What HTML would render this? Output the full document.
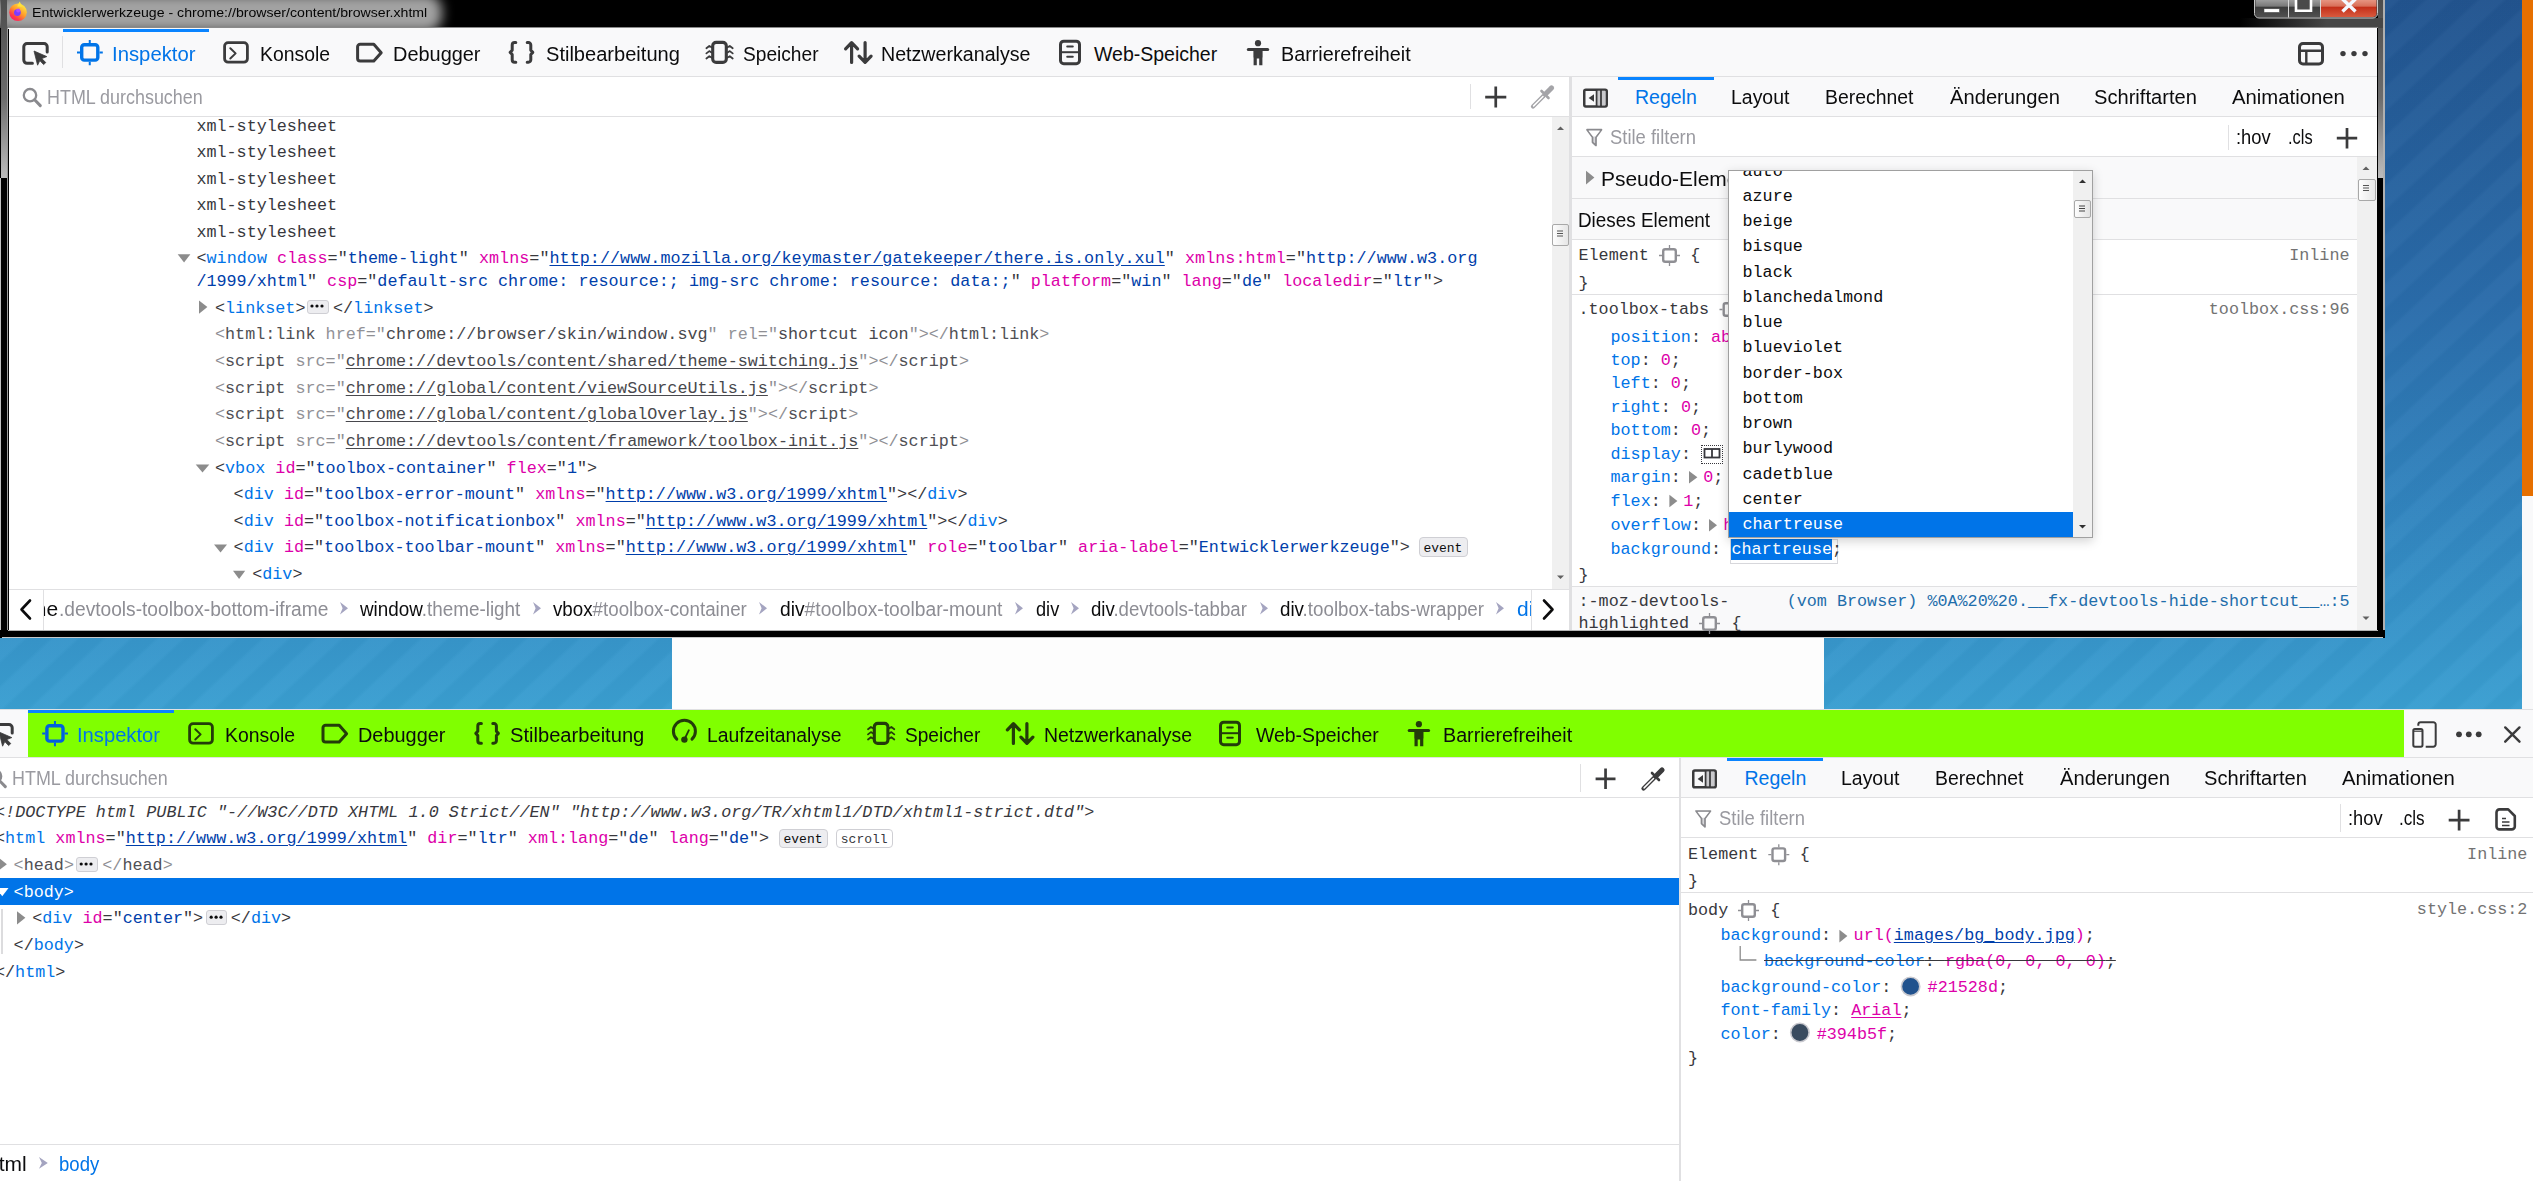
<!DOCTYPE html><html><head><meta charset="utf-8"><style>*{margin:0;padding:0;box-sizing:content-box}
html,body{width:2533px;height:1181px;overflow:hidden;background:#fff}
body{position:relative}
div,svg{position:absolute}
.s{font-family:"Liberation Sans",sans-serif;white-space:pre;line-height:normal;transform-origin:0 0}
.m{font-family:"Liberation Mono",monospace;white-space:pre;line-height:normal;color:#38383d}
i{font-style:inherit}
.t{color:#0074e8}.a{color:#dd00a9}.v{color:#003eaa}.p{color:#38383d}
.gp{color:#8f8f94}.gt{color:#505055}.ga{color:#929297}.gv{color:#48484d}
.u{text-decoration:underline;text-underline-offset:2px}
.pn{color:#0074e8}.pv{color:#dd00a9}.src{color:#737373}.ua{color:#1f6eab}.sw{color:#fff}
</style></head><body><div style="left:0px;top:0px;width:2533px;height:709px;background:repeating-linear-gradient(137deg, rgba(255,255,255,0.024) 0px, rgba(255,255,255,0.024) 14.5px, rgba(0,0,0,0.02) 18px, rgba(0,0,0,0.02) 32.5px, rgba(255,255,255,0.024) 36px),linear-gradient(180deg, #22548f 0px, #2a6caa 300px, #3286c0 520px, #3a9fd1 709px);"></div><div style="left:672px;top:638px;width:1152px;height:71px;background:#fdfdfd;"></div><div style="left:2522px;top:0px;width:11px;height:496px;background:#e66f00;"></div><div style="left:2522px;top:496px;width:11px;height:214px;background:#f9f9fa;"></div><div style="left:0px;top:0px;width:2385px;height:28px;background:#000;"></div><div style="left:0;top:0;width:2385px;height:28px;overflow:hidden"><div style="left:-6px;top:-6px;width:448px;height:38px;border-radius:16px;background:#a2a2a2;filter:blur(6px)"></div></div><div style="left:0px;top:28px;width:9px;height:610px;background:#000;"></div><div style="left:1px;top:0px;width:6px;height:178px;background:linear-gradient(180deg,#4d4d4d 0%,#6c6c6c 55%,#bdbdbd 100%);"></div><div style="left:7px;top:28px;width:1px;height:602px;background:#9a9a9a;"></div><div style="left:2377px;top:0px;width:8px;height:638px;background:#000;"></div><div style="left:2378px;top:0px;width:6px;height:178px;background:linear-gradient(180deg,#4d4d4d 0%,#6c6c6c 55%,#bdbdbd 100%);"></div><div style="left:2240px;top:18px;width:145px;height:10px;background:linear-gradient(90deg,rgba(60,60,60,0),rgba(70,70,70,1) 60%);"></div><div style="left:2383px;top:0px;width:1.5px;height:638px;background:#b0b0b0;"></div><div style="left:0px;top:178px;width:1px;height:460px;background:#c0c0c0;"></div><div style="left:0px;top:630px;width:2385px;height:8px;background:#000;"></div><div style="left:8px;top:630px;width:2370px;height:1px;background:#b4b4b4;"></div><div style="left:2px;top:637px;width:2381px;height:1px;background:#c8c8c8;"></div><div style="left:8px;top:28px;width:2369px;height:1px;background:#f0f0f0;"></div><div style="left:8px;top:27px;width:2370px;height:1px;background:#8a8a8a;"></div><div class="s" style="left:31.75px;top:4.60px;font-size:13.5px;color:#050505;transform:scaleX(1.0452);">Entwicklerwerkzeuge - chrome://browser/content/browser.xhtml</div><svg width="2533" height="1181" viewBox="0 0 2533 1181" style="left:0;top:0;position:absolute"><defs><linearGradient id="ffg" x1="0.85" y1="0.1" x2="0.2" y2="0.95"><stop offset="0" stop-color="#ffe740"/><stop offset="0.45" stop-color="#ff9a2a"/><stop offset="0.8" stop-color="#ff3b4a"/><stop offset="1" stop-color="#ff1a6a"/></linearGradient><linearGradient id="wbg" x1="0" y1="0" x2="0" y2="1"><stop offset="0" stop-color="#a8a8a8"/><stop offset="0.42" stop-color="#7a7a7a"/><stop offset="0.5" stop-color="#3c3c3c"/><stop offset="1" stop-color="#505050"/></linearGradient><linearGradient id="wbr" x1="0" y1="0" x2="0" y2="1"><stop offset="0" stop-color="#eaa08e"/><stop offset="0.42" stop-color="#d9705a"/><stop offset="0.5" stop-color="#c4301a"/><stop offset="1" stop-color="#d85a3e"/></linearGradient></defs><circle cx="18" cy="12.3" r="8.8" fill="url(#ffg)"/><path d="M17.2 6.5 L19.6 1.6 L22.6 6.8 Z" fill="#ffe33a"/><circle cx="17.4" cy="12.6" r="3.4" fill="#7b3cff"/><circle cx="18.2" cy="10.4" r="2" fill="#b04cff"/><path d="M2254.5 -2 V13.5 a4.5 4.5 0 0 0 4.5 4.5 H2373 a4.5 4.5 0 0 0 4.5 -4.5 V-2" fill="#3a3a3a" stroke="#c8c8c8" stroke-width="1"/><path d="M2255.5 -2 V13 a4 4 0 0 0 4 4 H2288 V-2 Z" fill="url(#wbg)"/><rect x="2289" y="-2" width="31" height="19" fill="url(#wbg)"/><path d="M2321 -2 V17 H2372.5 a4 4 0 0 0 4 -4 V-2 Z" fill="url(#wbr)"/><path d="M2288.5 -2 V17.5 M2320.5 -2 V17.5" stroke="#d8d8d8" stroke-width="1"/><rect x="2264" y="8.8" width="15.5" height="3.6" fill="#fff" stroke="#444" stroke-width="0.5"/><path d="M2296 -2 V10.8 H2311 V-2" fill="#4a4a4a" stroke="#fff" stroke-width="2.6"/><path d="M2342.5 -1 L2355.5 11.5 M2355.5 -1 L2342.5 11.5" stroke="#f4f8ff" stroke-width="3.4"/></svg><div style="left:9px;top:28px;width:2368px;height:48px;background:#f9f9fa;"></div><div style="left:9px;top:76px;width:2368px;height:1px;background:#e0e0e2;"></div><div style="left:62px;top:36px;width:1px;height:32px;background:#e0e0e2;"></div><div style="left:63px;top:29px;width:146px;height:3px;background:#0a84ff;"></div><div class="s" style="left:111.96px;top:43.00px;font-size:19.5px;color:#0074e8;transform:scaleX(1.0412);">Inspektor</div><div class="s" style="left:259.81px;top:43.00px;font-size:19.5px;color:#0c0c0d;transform:scaleX(0.9938);">Konsole</div><div class="s" style="left:392.98px;top:43.00px;font-size:19.5px;color:#0c0c0d;transform:scaleX(1.0217);">Debugger</div><div class="s" style="left:545.50px;top:43.00px;font-size:19.5px;color:#0c0c0d;transform:scaleX(1.0290);">Stilbearbeitung</div><div class="s" style="left:743.00px;top:43.00px;font-size:19.5px;color:#0c0c0d;transform:scaleX(0.9810);">Speicher</div><div class="s" style="left:880.99px;top:43.00px;font-size:19.5px;color:#0c0c0d;transform:scaleX(1.0066);">Netzwerkanalyse</div><div class="s" style="left:1094.00px;top:43.00px;font-size:19.5px;color:#0c0c0d;">Web-Speicher</div><div class="s" style="left:1280.69px;top:43.00px;font-size:19.5px;color:#0c0c0d;transform:scaleX(1.0144);">Barrierefreiheit</div><div style="left:9px;top:77px;width:1560px;height:39px;background:#fff;"></div><div style="left:9px;top:116px;width:1560px;height:1px;background:#e0e0e2;"></div><div class="s" style="left:46.58px;top:86.20px;font-size:19.5px;color:#9a9aa0;transform:scaleX(0.9191);">HTML durchsuchen</div><div style="left:1470px;top:84px;width:1px;height:25px;background:#e0e0e2;"></div><div style="left:9px;top:117px;width:1543px;height:473px;background:#fff;"></div><div style="left:1552px;top:117px;width:17px;height:473px;background:#f0f0f0;"></div><div style="left:1552px;top:224px;width:15px;height:20px;border:1px solid #a8a8a8;border-radius:2px;background:linear-gradient(90deg,#fdfdfd,#e6e6e6)"></div><div class="m" style="left:196.40px;top:116.50px;font-size:16.75px;"><i class="p">xml-stylesheet</i></div><div class="m" style="left:196.40px;top:143.10px;font-size:16.75px;"><i class="p">xml-stylesheet</i></div><div class="m" style="left:196.40px;top:169.70px;font-size:16.75px;"><i class="p">xml-stylesheet</i></div><div class="m" style="left:196.40px;top:196.30px;font-size:16.75px;"><i class="p">xml-stylesheet</i></div><div class="m" style="left:196.40px;top:222.90px;font-size:16.75px;"><i class="p">xml-stylesheet</i></div><div class="m" style="left:196.40px;top:248.60px;font-size:16.75px;letter-spacing:0.035px;"><i class="p">&lt;</i><i class="t">window</i> <i class="a">class</i><i class="p">=&quot;</i><i class="v">theme-light</i><i class="p">&quot;</i> <i class="a">xmlns</i><i class="p">=&quot;</i><i class="v u">http://www.mozilla.org/keymaster/gatekeeper/there.is.only.xul</i><i class="p">&quot;</i> <i class="a">xmlns:html</i><i class="p">=&quot;</i><i class="v">http://www.w3.org</i></div><div class="m" style="left:196.40px;top:272.20px;font-size:16.75px;"><i class="v">/1999/xhtml</i><i class="p">&quot;</i> <i class="a">csp</i><i class="p">=&quot;</i><i class="v">default-src chrome: resource:; img-src chrome: resource: data:;</i><i class="p">&quot;</i> <i class="a">platform</i><i class="p">=&quot;</i><i class="v">win</i><i class="p">&quot;</i> <i class="a">lang</i><i class="p">=&quot;</i><i class="v">de</i><i class="p">&quot;</i> <i class="a">localedir</i><i class="p">=&quot;</i><i class="v">ltr</i><i class="p">&quot;&gt;</i></div><div class="m" style="left:215.00px;top:298.60px;font-size:16.75px;"><i class="p">&lt;</i><i class="t">linkset</i><i class="p">&gt;</i></div><div style="left:307px;top:299.5px;width:19.5px;height:12px;background:#ededf0;border:1px solid #cfcfd4;border-radius:3px"></div><div class="m" style="left:333.00px;top:298.60px;font-size:16.75px;"><i class="p">&lt;/</i><i class="t">linkset</i><i class="p">&gt;</i></div><div class="m" style="left:215.00px;top:325.25px;font-size:16.75px;"><i class="gp">&lt;</i><i class="gt">html:link</i> <i class="ga">href</i><i class="gp">=&quot;</i><i class="gv">chrome://browser/skin/window.svg</i><i class="gp">&quot;</i> <i class="ga">rel</i><i class="gp">=&quot;</i><i class="gv">shortcut icon</i><i class="gp">&quot;&gt;&lt;/</i><i class="gt">html:link</i><i class="gp">&gt;</i></div><div class="m" style="left:215.00px;top:351.90px;font-size:16.75px;"><i class="gp">&lt;</i><i class="gt">script</i> <i class="ga">src</i><i class="gp">=&quot;</i><i class="gv u">chrome://devtools/content/shared/theme-switching.js</i><i class="gp">&quot;&gt;&lt;/</i><i class="gt">script</i><i class="gp">&gt;</i></div><div class="m" style="left:215.00px;top:378.55px;font-size:16.75px;"><i class="gp">&lt;</i><i class="gt">script</i> <i class="ga">src</i><i class="gp">=&quot;</i><i class="gv u">chrome://global/content/viewSourceUtils.js</i><i class="gp">&quot;&gt;&lt;/</i><i class="gt">script</i><i class="gp">&gt;</i></div><div class="m" style="left:215.00px;top:405.20px;font-size:16.75px;"><i class="gp">&lt;</i><i class="gt">script</i> <i class="ga">src</i><i class="gp">=&quot;</i><i class="gv u">chrome://global/content/globalOverlay.js</i><i class="gp">&quot;&gt;&lt;/</i><i class="gt">script</i><i class="gp">&gt;</i></div><div class="m" style="left:215.00px;top:431.85px;font-size:16.75px;"><i class="gp">&lt;</i><i class="gt">script</i> <i class="ga">src</i><i class="gp">=&quot;</i><i class="gv u">chrome://devtools/content/framework/toolbox-init.js</i><i class="gp">&quot;&gt;&lt;/</i><i class="gt">script</i><i class="gp">&gt;</i></div><div class="m" style="left:215.00px;top:458.50px;font-size:16.75px;"><i class="p">&lt;</i><i class="t">vbox</i> <i class="a">id</i><i class="p">=&quot;</i><i class="v">toolbox-container</i><i class="p">&quot;</i> <i class="a">flex</i><i class="p">=&quot;</i><i class="v">1</i><i class="p">&quot;&gt;</i></div><div class="m" style="left:233.60px;top:485.15px;font-size:16.75px;"><i class="p">&lt;</i><i class="t">div</i> <i class="a">id</i><i class="p">=&quot;</i><i class="v">toolbox-error-mount</i><i class="p">&quot;</i> <i class="a">xmlns</i><i class="p">=&quot;</i><i class="v u">http://www.w3.org/1999/xhtml</i><i class="p">&quot;&gt;&lt;/</i><i class="t">div</i><i class="p">&gt;</i></div><div class="m" style="left:233.60px;top:511.80px;font-size:16.75px;"><i class="p">&lt;</i><i class="t">div</i> <i class="a">id</i><i class="p">=&quot;</i><i class="v">toolbox-notificationbox</i><i class="p">&quot;</i> <i class="a">xmlns</i><i class="p">=&quot;</i><i class="v u">http://www.w3.org/1999/xhtml</i><i class="p">&quot;&gt;&lt;/</i><i class="t">div</i><i class="p">&gt;</i></div><div class="m" style="left:233.60px;top:538.45px;font-size:16.75px;"><i class="p">&lt;</i><i class="t">div</i> <i class="a">id</i><i class="p">=&quot;</i><i class="v">toolbox-toolbar-mount</i><i class="p">&quot;</i> <i class="a">xmlns</i><i class="p">=&quot;</i><i class="v u">http://www.w3.org/1999/xhtml</i><i class="p">&quot;</i> <i class="a">role</i><i class="p">=&quot;</i><i class="v">toolbar</i><i class="p">&quot;</i> <i class="a">aria-label</i><i class="p">=&quot;</i><i class="v">Entwicklerwerkzeuge</i><i class="p">&quot;&gt;</i></div><div style="left:1419px;top:537px;width:46.6px;height:17.5px;background:#ededf0;border:1px solid #cfcfd4;border-radius:4px"></div><div class="m" style="left:1423.40px;top:541.00px;font-size:13.0px;color:#0c0c0d;">event</div><div class="m" style="left:252.20px;top:565.10px;font-size:16.75px;"><i class="p">&lt;</i><i class="t">div</i><i class="p">&gt;</i></div><svg width="2533" height="1181" viewBox="0 0 2533 1181" style="left:0;top:0;position:absolute"><path d="M1557 130 L1560.5 126.5 L1564 130 Z" fill="#606060"/><path d="M1557 575.5 L1560.5 579 L1564 575.5 Z" fill="#606060"/><path d="M1557 231 H1563 M1557 233.5 H1563 M1557 236 H1563" stroke="#555" stroke-width="1"/><path d="M177.7 254.3 H190.39999999999998 L184.04999999999998 262.6 Z" fill="#8c8c8c"/><path d="M199 300.5 V313.7 L207.4 307.1 Z" fill="#8c8c8c"/><circle cx="312" cy="306" r="1.6" fill="#0c0c0d"/><circle cx="317" cy="306" r="1.6" fill="#0c0c0d"/><circle cx="322" cy="306" r="1.6" fill="#0c0c0d"/><path d="M195.7 464.4 H209.29999999999998 L202.5 472.5 Z" fill="#8c8c8c"/><path d="M214 544.4 H227 L220.5 552.5 Z" fill="#8c8c8c"/><path d="M233 570.8 H245.2 L239.1 578.9 Z" fill="#8c8c8c"/></svg><div style="left:9px;top:589px;width:1560px;height:1px;background:#e0e0e2;"></div><div style="left:9px;top:590px;width:1560px;height:40px;background:#fff;"></div><div style="left:43px;top:590px;width:1px;height:40px;background:#e0e0e2;"></div><div style="left:1531px;top:590px;width:1px;height:40px;background:#e0e0e2;"></div><div style="left:44px;top:590px;width:30px;height:40px;overflow:hidden"><div style="left:-44px;top:-590px;width:2533px;height:1181px"><div class="s" style="left:29.29px;top:597.90px;font-size:19.5px;color:#0c0c0d;transform:scaleX(1.0750);">me</div></div></div><div class="s" style="left:58.52px;top:597.90px;font-size:19.5px;color:#8d8d94;transform:scaleX(0.9822);">.devtools-toolbox-bottom-iframe</div><div style="left:1510px;top:590px;width:21px;height:40px;overflow:hidden"><div style="left:-1510px;top:-590px;width:2533px;height:1181px"><div class="s" style="left:1517.00px;top:597.90px;font-size:19.5px;color:#0074e8;transform:scaleX(1.0750);">div</div></div></div><div class="s" style="left:360.17px;top:597.90px;font-size:19.5px;color:#0c0c0d;transform:scaleX(0.9664);">window<span style="color:#8d8d94">.theme-light</span></div><div class="s" style="left:552.70px;top:597.90px;font-size:19.5px;color:#0c0c0d;transform:scaleX(0.9612);">vbox<span style="color:#8d8d94">#toolbox-container</span></div><div class="s" style="left:780.00px;top:597.90px;font-size:19.5px;color:#0c0c0d;transform:scaleX(0.9865);">div<span style="color:#8d8d94">#toolbox-toolbar-mount</span></div><div class="s" style="left:1035.50px;top:597.90px;font-size:19.5px;color:#0c0c0d;transform:scaleX(0.9334);">div</div><div class="s" style="left:1091.00px;top:597.90px;font-size:19.5px;color:#0c0c0d;transform:scaleX(0.9541);">div<span style="color:#8d8d94">.devtools-tabbar</span></div><div class="s" style="left:1279.80px;top:597.90px;font-size:19.5px;color:#0c0c0d;transform:scaleX(0.9620);">div<span style="color:#8d8d94">.toolbox-tabs-wrapper</span></div><svg width="2533" height="1181" viewBox="0 0 2533 1181" style="left:0;top:0;position:absolute"><path d="M340 602 L348 608.3 L340 614.6 L342.6 608.3 Z" fill="#a4a4c0"/><path d="M533 602 L541 608.3 L533 614.6 L535.6 608.3 Z" fill="#a4a4c0"/><path d="M759 602 L767 608.3 L759 614.6 L761.6 608.3 Z" fill="#a4a4c0"/><path d="M1015 602 L1023 608.3 L1015 614.6 L1017.6 608.3 Z" fill="#a4a4c0"/><path d="M1071 602 L1079 608.3 L1071 614.6 L1073.6 608.3 Z" fill="#a4a4c0"/><path d="M1260 602 L1268 608.3 L1260 614.6 L1262.6 608.3 Z" fill="#a4a4c0"/><path d="M1496 602 L1504 608.3 L1496 614.6 L1498.6 608.3 Z" fill="#a4a4c0"/><path d="M30 600.5 L21.5 609.5 L30 618.5" stroke="#0c0c0d" stroke-width="2.6" fill="none" stroke-linecap="round" stroke-linejoin="round"/><path d="M1544 600.5 L1552.5 609.5 L1544 618.5" stroke="#0c0c0d" stroke-width="2.6" fill="none" stroke-linecap="round" stroke-linejoin="round"/></svg><div style="left:1569px;top:77px;width:3px;height:553px;background:#e0e0e2;"></div><div style="left:1572px;top:77px;width:805px;height:39px;background:#f9f9fa;"></div><div style="left:1572px;top:116px;width:805px;height:1px;background:#e0e0e2;"></div><div style="left:1618px;top:77px;width:96px;height:3px;background:#0a84ff;"></div><div class="s" style="left:1635.00px;top:86.30px;font-size:19.5px;color:#0074e8;">Regeln</div><div class="s" style="left:1731.00px;top:86.30px;font-size:19.5px;color:#0c0c0d;transform:scaleX(0.9978);">Layout</div><div class="s" style="left:1825.01px;top:86.30px;font-size:19.5px;color:#0c0c0d;transform:scaleX(0.9946);">Berechnet</div><div class="s" style="left:1950.00px;top:86.30px;font-size:19.5px;color:#0c0c0d;transform:scaleX(1.0340);">Änderungen</div><div class="s" style="left:2094.00px;top:86.30px;font-size:19.5px;color:#0c0c0d;transform:scaleX(1.0317);">Schriftarten</div><div class="s" style="left:2232.00px;top:86.30px;font-size:19.5px;color:#0c0c0d;transform:scaleX(1.0413);">Animationen</div><div style="left:1572px;top:117px;width:805px;height:39px;background:#fff;"></div><div style="left:1572px;top:156px;width:805px;height:1px;background:#e0e0e2;"></div><div class="s" style="left:1609.50px;top:126.10px;font-size:19.5px;color:#9a9aa0;transform:scaleX(0.9447);">Stile filtern</div><div style="left:2228px;top:125px;width:1px;height:25px;background:#e0e0e2;"></div><div class="s" style="left:2236.06px;top:126.10px;font-size:19.5px;color:#0c0c0d;transform:scaleX(0.9416);">:hov</div><div class="s" style="left:2288.16px;top:126.10px;font-size:19.5px;color:#0c0c0d;transform:scaleX(0.8421);">.cls</div><div style="left:1572px;top:157px;width:785px;height:473px;background:#fff;"></div><div style="left:1572px;top:157px;width:785px;height:41px;background:#f9f9fa;"></div><div style="left:1572px;top:198px;width:785px;height:1px;background:#e0e0e2;"></div><div style="left:1572px;top:199px;width:785px;height:40px;background:#f9f9fa;"></div><div style="left:1572px;top:239px;width:785px;height:1px;background:#e0e0e2;"></div><div style="left:1572px;top:294px;width:785px;height:1px;background:#e0e0e2;"></div><div style="left:1572px;top:586px;width:785px;height:1px;background:#e0e0e2;"></div><div style="left:1572px;top:587px;width:785px;height:43px;background:#f9f9fa;"></div><div style="left:2357px;top:157px;width:20px;height:473px;background:#f0f0f0;"></div><div style="left:2358px;top:178.5px;width:15.5px;height:20.5px;border:1px solid #a8a8a8;border-radius:2px;background:linear-gradient(90deg,#fdfdfd,#e6e6e6)"></div><div class="s" style="left:1600.83px;top:167.60px;font-size:19.5px;color:#0c0c0d;transform:scaleX(1.0750);">Pseudo-Elemente</div><div class="s" style="left:1577.93px;top:208.60px;font-size:19.5px;color:#0c0c0d;transform:scaleX(0.9674);">Dieses Element</div><div class="m" style="left:1578.50px;top:246.00px;font-size:16.75px;"><i class="p">Element</i></div><div class="m" style="left:1690.30px;top:246.00px;font-size:16.75px;"><i class="p">{</i></div><div class="m" style="left:2289.20px;top:246.00px;font-size:16.75px;"><i class="src">Inline</i></div><div class="m" style="left:1578.50px;top:274.30px;font-size:16.75px;"><i class="p">}</i></div><div class="m" style="left:1578.50px;top:300.20px;font-size:16.75px;"><i class="p">.toolbox-tabs</i></div><div class="m" style="left:2208.80px;top:300.20px;font-size:16.75px;"><i class="src">toolbox.css:96</i></div><div class="m" style="left:1610.50px;top:327.60px;font-size:16.75px;"><i class="pn">position</i><i class="p">: </i><i class="pv">absolute</i><i class="p">;</i></div><div class="m" style="left:1610.50px;top:351.30px;font-size:16.75px;"><i class="pn">top</i><i class="p">: </i><i class="pv">0</i><i class="p">;</i></div><div class="m" style="left:1610.50px;top:374.40px;font-size:16.75px;"><i class="pn">left</i><i class="p">: </i><i class="pv">0</i><i class="p">;</i></div><div class="m" style="left:1610.50px;top:398.30px;font-size:16.75px;"><i class="pn">right</i><i class="p">: </i><i class="pv">0</i><i class="p">;</i></div><div class="m" style="left:1610.50px;top:421.40px;font-size:16.75px;"><i class="pn">bottom</i><i class="p">: </i><i class="pv">0</i><i class="p">;</i></div><div class="m" style="left:1610.50px;top:445.10px;font-size:16.75px;"><i class="pn">display</i><i class="p">:</i></div><div style="left:1701px;top:444.7px;width:20px;height:17px;border:1.5px dotted #38383d"></div><div class="m" style="left:1733.50px;top:445.10px;font-size:16.75px;"><i class="pv">grid</i><i class="p">;</i></div><div class="m" style="left:1610.50px;top:468.20px;font-size:16.75px;"><i class="pn">margin</i><i class="p">:</i></div><div class="m" style="left:1703.30px;top:468.20px;font-size:16.75px;"><i class="pv">0</i><i class="p">;</i></div><div class="m" style="left:1610.50px;top:491.90px;font-size:16.75px;"><i class="pn">flex</i><i class="p">:</i></div><div class="m" style="left:1683.20px;top:491.90px;font-size:16.75px;"><i class="pv">1</i><i class="p">;</i></div><div class="m" style="left:1610.50px;top:516.40px;font-size:16.75px;"><i class="pn">overflow</i><i class="p">:</i></div><div class="m" style="left:1723.20px;top:516.40px;font-size:16.75px;"><i class="pv">hidden</i><i class="p">;</i></div><div class="m" style="left:1610.50px;top:540.10px;font-size:16.75px;"><i class="pn">background</i><i class="p">:</i></div><div style="left:1730px;top:538.5px;width:106px;height:23px;border:1px solid #d7d7db;background:#fff"></div><div style="left:1730.7px;top:539.2px;width:101.1px;height:21.3px;background:#0074e8;"></div><div class="m" style="left:1731.50px;top:540.10px;font-size:16.75px;"><i class="sw">chartreuse</i><i class="p">;</i></div><div class="m" style="left:1578.50px;top:565.50px;font-size:16.75px;"><i class="p">}</i></div><div class="m" style="left:1578.50px;top:592.30px;font-size:16.75px;"><i class="p">:-moz-devtools-</i></div><div class="m" style="left:1786.70px;top:592.30px;font-size:16.75px;"><i class="ua">(vom Browser) %0A%20%20.__fx-devtools-hide-shortcut__…:5</i></div><div style="left:1572px;top:587px;width:785px;height:43px;overflow:hidden"><div style="left:-1572px;top:-587px;width:2533px;height:700px"><div class="m" style="left:1578.50px;top:613.60px;font-size:16.75px;"><i class="p">highlighted</i></div></div></div><div class="m" style="left:1731.50px;top:613.60px;font-size:16.75px;"><i class="p">{</i></div><svg width="2533" height="1181" viewBox="0 0 2533 1181" style="left:0;top:0;position:absolute"><path d="M2362.5 170 L2366 166.5 L2369.5 170 Z" fill="#606060"/><path d="M2362.5 616.5 L2366 620 L2369.5 616.5 Z" fill="#606060"/><path d="M2363 185.5 H2369 M2363 188 H2369 M2363 190.5 H2369" stroke="#555" stroke-width="1"/><path d="M1586 170.8 V184.4 L1594.4 177.60000000000002 Z" fill="#8c8c8c"/><rect x="1663.2" y="249.2" width="12.6" height="12.6" rx="2" fill="none" stroke="#8f8f94" stroke-width="2.4"/><path d="M1659 255.5 H1662 M1677 255.5 H1680 M1669.5 245 V248 M1669.5 263 V266" stroke="#8f8f94" stroke-width="1.3"/><rect x="1723.7" y="303.2" width="12.6" height="12.6" rx="2" fill="none" stroke="#8f8f94" stroke-width="2.4"/><path d="M1719.5 309.5 H1722.5 M1737.5 309.5 H1740.5 M1730.0 299 V302 M1730.0 317 V320" stroke="#8f8f94" stroke-width="1.3"/><rect x="1704.5" y="449" width="15" height="8.5" fill="none" stroke="#38383d" stroke-width="1.8"/><path d="M1712 449 V457.5" stroke="#38383d" stroke-width="1.8"/><path d="M1689 471 V483.6 L1697.4 477.3 Z" fill="#8c8c8c"/><path d="M1669.4 494.7 V507.3 L1677.4 501.0 Z" fill="#8c8c8c"/><path d="M1709 519 V531.6 L1717 525.3 Z" fill="#8c8c8c"/><rect x="1703.2" y="617.2" width="12.6" height="12.6" rx="2" fill="none" stroke="#8f8f94" stroke-width="2.4"/><path d="M1699 623.5 H1702 M1717 623.5 H1720 M1709.5 613 V616 M1709.5 631 V634" stroke="#8f8f94" stroke-width="1.3"/></svg><svg width="2533" height="1181" viewBox="0 0 2533 1181" style="left:0;top:0;position:absolute"><g transform="translate(0 0)"><path d="M32.4 63.3 H27 a3.2 3.2 0 0 1 -3.2 -3.2 V46.7 a3.2 3.2 0 0 1 3.2 -3.2 H44 a3.2 3.2 0 0 1 3.2 3.2 V52" fill="none" stroke="#3b3b3c" stroke-width="3" stroke-linecap="round"/><path d="M34 51 L46.8 56.6 L41.8 58.6 L45.8 62.6 L43.6 64.6 L39.8 60.6 L37.6 65.2 Z" fill="#3b3b3c" stroke="#3b3b3c" stroke-width="0.8" stroke-linejoin="round"/></g><g transform="translate(0 0)"><rect x="81.7" y="44.7" width="16.1" height="15.4" rx="2.6" fill="none" stroke="#0074e8" stroke-width="3.4"/><path d="M89.75 40 V43 M89.75 61.8 V65.3 M77 52.4 H80 M99.5 52.4 H102.8" stroke="#0074e8" stroke-width="2"/></g><g transform="translate(0 0)"><rect x="224.6" y="42.6" width="22.8" height="19.6" rx="3.5" fill="none" stroke="#3b3b3c" stroke-width="2.8"/><path d="M230.3 48.3 L235.6 53.4 L230.3 58.5" fill="none" stroke="#3b3b3c" stroke-width="2" stroke-linecap="round" stroke-linejoin="round"/></g><g transform="translate(0 0)"><path d="M360.2 44.2 H373.8 L381.2 52.65 L373.8 61.1 H360.2 a2.6 2.6 0 0 1 -2.6 -2.6 V46.8 a2.6 2.6 0 0 1 2.6 -2.6 Z" fill="none" stroke="#3b3b3c" stroke-width="3" stroke-linejoin="round"/></g><g transform="translate(0 0)"><path d="M515.8 42.6 H514.6 a2.4 2.4 0 0 0 -2.4 2.4 V50.3 L510.2 52.4 L512.2 54.5 V59.8 a2.4 2.4 0 0 0 2.4 2.4 H515.8" fill="none" stroke="#3b3b3c" stroke-width="3" stroke-linecap="round" stroke-linejoin="round"/><path d="M527.2 42.6 H528.4 a2.4 2.4 0 0 1 2.4 2.4 V50.3 L532.8 52.4 L530.8 54.5 V59.8 a2.4 2.4 0 0 1 -2.4 2.4 H527.2" fill="none" stroke="#3b3b3c" stroke-width="3" stroke-linecap="round" stroke-linejoin="round"/></g><g transform="translate(0 0)"><rect x="712.7" y="42.4" width="13.6" height="20" rx="3.4" fill="none" stroke="#3b3b3c" stroke-width="3.1"/><path d="M711.5 47.3 L709.3 46.0 L706.4 48.3 M727.6 47.3 L729.8 46.0 L732.7 48.3 M711.5 52.4 L709.3 51.1 L706.4 53.4 M727.6 52.4 L729.8 51.1 L732.7 53.4 M711.5 57.5 L709.3 56.2 L706.4 58.5 M727.6 57.5 L729.8 56.2 L732.7 58.5 " fill="none" stroke="#3b3b3c" stroke-width="1.8" stroke-linecap="round" stroke-linejoin="round"/></g><g transform="translate(0 0)"><path d="M851.6 62.5 V43 M845.6 48.9 L851.6 42.6 L857.6 48.9 M865.1 42.5 V62 M859.1 56.1 L865.1 62.4 L871.1 56.1" fill="none" stroke="#3b3b3c" stroke-width="3.2" stroke-linecap="round" stroke-linejoin="round"/></g><g transform="translate(0 0)"><rect x="1060.5" y="41.2" width="19" height="22.5" rx="3.2" fill="none" stroke="#3b3b3c" stroke-width="3"/><path d="M1060.5 52.2 H1079.5" stroke="#3b3b3c" stroke-width="2"/><path d="M1067.2 46.6 H1072.8 M1067.2 56.8 H1072.8" stroke="#3b3b3c" stroke-width="2" stroke-linecap="round"/></g><g transform="translate(0 0)"><circle cx="1258" cy="43.2" r="3.1" fill="#3b3b3c"/><path d="M1248.3 49.4 H1267.7" stroke="#3b3b3c" stroke-width="3" stroke-linecap="round"/><path d="M1253.4 48.5 H1262.6 V57.5 H1262.4 V65.2 H1259.2 V58.6 H1256.8 V65.2 H1253.6 V57.5 H1253.4 Z" fill="#3b3b3c"/></g><rect x="2299.5" y="43.5" width="23" height="20.5" rx="3.5" fill="none" stroke="#3b3b3c" stroke-width="3"/><path d="M2299.5 50.8 H2322.5 M2306.3 50.8 V64" stroke="#3b3b3c" stroke-width="2.4"/><circle cx="2343" cy="53.6" r="2.7" fill="#3b3b3c"/><circle cx="2354" cy="53.6" r="2.7" fill="#3b3b3c"/><circle cx="2365" cy="53.6" r="2.7" fill="#3b3b3c"/><circle cx="30" cy="95.2" r="6.2" fill="none" stroke="#8a8a8e" stroke-width="2.3"/><path d="M34.6 99.8 L40.3 105.6" stroke="#8a8a8e" stroke-width="3" stroke-linecap="round"/><path d="M1485.2 97.2 H1506.3 M1495.75 86.6 V107.6" stroke="#3b3b3c" stroke-width="2.7"/><g transform="translate(1531 86)"><path d="M2 20.5 L12.5 10" stroke="#a4a4a8" stroke-width="4.2" stroke-linecap="round"/><path d="M2.6 19.9 L12 10.5" stroke="#fff" stroke-width="1.5" stroke-linecap="round"/><path d="M15.5 7 L20.5 2" stroke="#a4a4a8" stroke-width="5.2" stroke-linecap="round"/><path d="M10.5 5 L17.5 12" stroke="#a4a4a8" stroke-width="2.6" stroke-linecap="round"/></g><g transform="translate(1583 88.4)"><rect x="1.25" y="1.25" width="22.5" height="16.8" rx="1.6" fill="none" stroke="#3b3b3c" stroke-width="2.5"/><rect x="14.3" y="2.3" width="3.4" height="14.7" fill="#c9c9cc"/><rect x="18.6" y="2.3" width="3.6" height="14.7" fill="#c9c9cc"/><path d="M13.6 1.2 V18 M18 1.2 V18" stroke="#3b3b3c" stroke-width="1.8"/><path d="M11 5.8 V13.4 L5.6 9.6 Z" fill="#3b3b3c"/></g><g transform="translate(1586 128.7)"><path d="M1 1 H15.5 L10 8.5 V16.8 L6.5 13.6 V8.5 Z" fill="#d7d7db" stroke="#8a8a8e" stroke-width="1.7" stroke-linejoin="round"/><path d="M2.5 2 H14 L9.4 7.8 H7.1 Z" fill="#fff"/></g><path d="M2336.8 138.2 H2357.2 M2347 128 V148.4" stroke="#3b3b3c" stroke-width="2.7"/></svg><div style="left:1728px;top:170px;width:363px;height:366px;border:1px solid #a0a0a0;background:#fff;box-shadow:0 3px 10px rgba(0,0,0,0.18);overflow:hidden"><div style="left:-1729px;top:-171px;width:2533px;height:1181px"><div style="left:1729px;top:512px;width:343.5px;height:25.5px;background:#0074e8;"></div><div class="m" style="left:1742.50px;top:161.60px;font-size:16.75px;color:#0c0c0d;">auto</div><div class="m" style="left:1742.50px;top:186.85px;font-size:16.75px;color:#0c0c0d;">azure</div><div class="m" style="left:1742.50px;top:212.10px;font-size:16.75px;color:#0c0c0d;">beige</div><div class="m" style="left:1742.50px;top:237.35px;font-size:16.75px;color:#0c0c0d;">bisque</div><div class="m" style="left:1742.50px;top:262.60px;font-size:16.75px;color:#0c0c0d;">black</div><div class="m" style="left:1742.50px;top:287.85px;font-size:16.75px;color:#0c0c0d;">blanchedalmond</div><div class="m" style="left:1742.50px;top:313.10px;font-size:16.75px;color:#0c0c0d;">blue</div><div class="m" style="left:1742.50px;top:338.35px;font-size:16.75px;color:#0c0c0d;">blueviolet</div><div class="m" style="left:1742.50px;top:363.60px;font-size:16.75px;color:#0c0c0d;">border-box</div><div class="m" style="left:1742.50px;top:388.85px;font-size:16.75px;color:#0c0c0d;">bottom</div><div class="m" style="left:1742.50px;top:414.10px;font-size:16.75px;color:#0c0c0d;">brown</div><div class="m" style="left:1742.50px;top:439.35px;font-size:16.75px;color:#0c0c0d;">burlywood</div><div class="m" style="left:1742.50px;top:464.60px;font-size:16.75px;color:#0c0c0d;">cadetblue</div><div class="m" style="left:1742.50px;top:489.85px;font-size:16.75px;color:#0c0c0d;">center</div><div class="m" style="left:1742.50px;top:515.10px;font-size:16.75px;color:#fff;">chartreuse</div><div style="left:2073px;top:171px;width:19.5px;height:366px;background:#f0f0f0;"></div><div style="left:2073.5px;top:200px;width:15px;height:15.5px;border:1px solid #a8a8a8;border-radius:2px;background:linear-gradient(90deg,#fdfdfd,#e2e2e2)"></div></div></div><svg width="2533" height="1181" viewBox="0 0 2533 1181" style="left:0;top:0;position:absolute"><path d="M2079 183 L2082.5 179.5 L2086 183 Z" fill="#303030"/><path d="M2079 525 L2082.5 528.5 L2086 525 Z" fill="#303030"/><path d="M2079 206 H2085 M2079 208.5 H2085 M2079 211 H2085" stroke="#444" stroke-width="1"/></svg><div style="left:0px;top:709px;width:2533px;height:48px;background:#f9f9fa;"></div><div style="left:0px;top:709px;width:2533px;height:1px;background:#e0e0e2;"></div><div style="left:28px;top:710px;width:2376px;height:47px;background:#80ff00;"></div><div style="left:28px;top:710px;width:146px;height:3px;background:#0a84ff;"></div><div style="left:0px;top:757px;width:2533px;height:1px;background:#e0e0e2;"></div><div class="s" style="left:77.47px;top:724.00px;font-size:19.5px;color:#0074e8;transform:scaleX(1.0349);">Inspektor</div><div class="s" style="left:224.51px;top:724.00px;font-size:19.5px;color:#0c0c0d;transform:scaleX(0.9938);">Konsole</div><div class="s" style="left:358.28px;top:724.00px;font-size:19.5px;color:#0c0c0d;transform:scaleX(1.0205);">Debugger</div><div class="s" style="left:510.10px;top:724.00px;font-size:19.5px;color:#0c0c0d;transform:scaleX(1.0321);">Stilbearbeitung</div><div class="s" style="left:707.41px;top:724.00px;font-size:19.5px;color:#0c0c0d;transform:scaleX(0.9920);">Laufzeitanalyse</div><div class="s" style="left:904.50px;top:724.00px;font-size:19.5px;color:#0c0c0d;transform:scaleX(0.9785);">Speicher</div><div class="s" style="left:1043.50px;top:724.00px;font-size:19.5px;color:#0c0c0d;transform:scaleX(0.9970);">Netzwerkanalyse</div><div class="s" style="left:1255.80px;top:724.00px;font-size:19.5px;color:#0c0c0d;transform:scaleX(0.9959);">Web-Speicher</div><div class="s" style="left:1442.99px;top:724.00px;font-size:19.5px;color:#0c0c0d;transform:scaleX(1.0097);">Barrierefreiheit</div><svg width="2533" height="1181" viewBox="0 0 2533 1181" style="left:0;top:0;position:absolute"><g transform="translate(-35 681)"><path d="M32.4 63.3 H27 a3.2 3.2 0 0 1 -3.2 -3.2 V46.7 a3.2 3.2 0 0 1 3.2 -3.2 H44 a3.2 3.2 0 0 1 3.2 3.2 V52" fill="none" stroke="#3b3b3c" stroke-width="3" stroke-linecap="round"/><path d="M34 51 L46.8 56.6 L41.8 58.6 L45.8 62.6 L43.6 64.6 L39.8 60.6 L37.6 65.2 Z" fill="#3b3b3c" stroke="#3b3b3c" stroke-width="0.8" stroke-linejoin="round"/></g><g transform="translate(-34.8 681)"><rect x="81.7" y="44.7" width="16.1" height="15.4" rx="2.6" fill="none" stroke="#0060df" stroke-width="3.4"/><path d="M89.75 40 V43 M89.75 61.8 V65.3 M77 52.4 H80 M99.5 52.4 H102.8" stroke="#0060df" stroke-width="2"/></g><g transform="translate(-35 681)"><rect x="224.6" y="42.6" width="22.8" height="19.6" rx="3.5" fill="none" stroke="#233c0a" stroke-width="2.8"/><path d="M230.3 48.3 L235.6 53.4 L230.3 58.5" fill="none" stroke="#233c0a" stroke-width="2" stroke-linecap="round" stroke-linejoin="round"/></g><g transform="translate(-34.6 681)"><path d="M360.2 44.2 H373.8 L381.2 52.65 L373.8 61.1 H360.2 a2.6 2.6 0 0 1 -2.6 -2.6 V46.8 a2.6 2.6 0 0 1 2.6 -2.6 Z" fill="none" stroke="#233c0a" stroke-width="3" stroke-linejoin="round"/></g><g transform="translate(-34.4 681)"><path d="M515.8 42.6 H514.6 a2.4 2.4 0 0 0 -2.4 2.4 V50.3 L510.2 52.4 L512.2 54.5 V59.8 a2.4 2.4 0 0 0 2.4 2.4 H515.8" fill="none" stroke="#233c0a" stroke-width="3" stroke-linecap="round" stroke-linejoin="round"/><path d="M527.2 42.6 H528.4 a2.4 2.4 0 0 1 2.4 2.4 V50.3 L532.8 52.4 L530.8 54.5 V59.8 a2.4 2.4 0 0 1 -2.4 2.4 H527.2" fill="none" stroke="#233c0a" stroke-width="3" stroke-linecap="round" stroke-linejoin="round"/></g><path d="M676.8 739.2 A11 11 0 1 1 692 739.2" fill="none" stroke="#233c0a" stroke-width="3" stroke-linecap="round"/><path d="M684.6 739 L688.9 730.2" stroke="#233c0a" stroke-width="1.8" stroke-linecap="round"/><circle cx="684.4" cy="739.6" r="3.2" fill="#233c0a"/><g transform="translate(161.6 681)"><rect x="712.7" y="42.4" width="13.6" height="20" rx="3.4" fill="none" stroke="#233c0a" stroke-width="3.1"/><path d="M711.5 47.3 L709.3 46.0 L706.4 48.3 M727.6 47.3 L729.8 46.0 L732.7 48.3 M711.5 52.4 L709.3 51.1 L706.4 53.4 M727.6 52.4 L729.8 51.1 L732.7 53.4 M711.5 57.5 L709.3 56.2 L706.4 58.5 M727.6 57.5 L729.8 56.2 L732.7 58.5 " fill="none" stroke="#233c0a" stroke-width="1.8" stroke-linecap="round" stroke-linejoin="round"/></g><g transform="translate(161.8 681)"><path d="M851.6 62.5 V43 M845.6 48.9 L851.6 42.6 L857.6 48.9 M865.1 42.5 V62 M859.1 56.1 L865.1 62.4 L871.1 56.1" fill="none" stroke="#233c0a" stroke-width="3.2" stroke-linecap="round" stroke-linejoin="round"/></g><g transform="translate(160 681)"><rect x="1060.5" y="41.2" width="19" height="22.5" rx="3.2" fill="none" stroke="#233c0a" stroke-width="3"/><path d="M1060.5 52.2 H1079.5" stroke="#233c0a" stroke-width="2"/><path d="M1067.2 46.6 H1072.8 M1067.2 56.8 H1072.8" stroke="#233c0a" stroke-width="2" stroke-linecap="round"/></g><g transform="translate(160.9 681)"><circle cx="1258" cy="43.2" r="3.1" fill="#233c0a"/><path d="M1248.3 49.4 H1267.7" stroke="#233c0a" stroke-width="3" stroke-linecap="round"/><path d="M1253.4 48.5 H1262.6 V57.5 H1262.4 V65.2 H1259.2 V58.6 H1256.8 V65.2 H1253.6 V57.5 H1253.4 Z" fill="#233c0a"/></g><path d="M2418.3 725.8 V724.6 a2.4 2.4 0 0 1 2.4 -2.4 H2433.3 a2.4 2.4 0 0 1 2.4 2.4 V744.3 a2.4 2.4 0 0 1 -2.4 2.4 H2425.7" fill="none" stroke="#3b3b3c" stroke-width="2"/><rect x="2413.3" y="729" width="9.2" height="17.7" rx="1.6" fill="none" stroke="#3b3b3c" stroke-width="2"/><path d="M2413.3 731.2 H2422.5" stroke="#3b3b3c" stroke-width="1.2"/><circle cx="2459" cy="734.3" r="2.9" fill="#3b3b3c"/><circle cx="2468.8" cy="734.3" r="2.9" fill="#3b3b3c"/><circle cx="2478.7" cy="734.3" r="2.9" fill="#3b3b3c"/><path d="M2505.2 727.4 L2519.5 741.7 M2519.5 727.4 L2505.2 741.7" stroke="#3b3b3c" stroke-width="2.4" stroke-linecap="round"/></svg><div style="left:0px;top:758px;width:1678.5px;height:39px;background:#fff;"></div><div style="left:0px;top:797px;width:1678.5px;height:1px;background:#e0e0e2;"></div><div class="s" style="left:11.68px;top:767.20px;font-size:19.5px;color:#9a9aa0;transform:scaleX(0.9191);">HTML durchsuchen</div><div style="left:1580px;top:763.5px;width:1px;height:28px;background:#e0e0e2;"></div><svg width="2533" height="1181" viewBox="0 0 2533 1181" style="left:0;top:0;position:absolute"><circle cx="-5" cy="876.2" r="6.2" fill="none" stroke="#8a8a8e" stroke-width="2.3" transform="translate(0 -100)"/><path d="M-0.4 780.8 L5.3 786.6" stroke="#8a8a8e" stroke-width="3" stroke-linecap="round"/><path d="M1595.6 778.8 H1615.5 M1605.55 768.6 V789" stroke="#3b3b3c" stroke-width="2.7"/><g transform="translate(1641.5 768)"><path d="M2 20.5 L12.5 10" stroke="#3b3b3c" stroke-width="4.2" stroke-linecap="round"/><path d="M2.6 19.9 L12 10.5" stroke="#fff" stroke-width="1.5" stroke-linecap="round"/><path d="M15.5 7 L20.5 2" stroke="#3b3b3c" stroke-width="5.2" stroke-linecap="round"/><path d="M10.5 5 L17.5 12" stroke="#3b3b3c" stroke-width="2.6" stroke-linecap="round"/></g></svg><div style="left:0px;top:798px;width:1678.5px;height:346px;background:#fff;"></div><div style="left:0px;top:878px;width:1678.5px;height:27px;background:#0074e8;"></div><div style="left:1px;top:908.5px;width:2px;height:45.5px;background:#dcdcde;"></div><div class="m" style="left:-5.00px;top:803.10px;font-size:16.75px;font-style:italic;color:#38383d;letter-spacing:0.034px;">&lt;!DOCTYPE html PUBLIC &quot;-//W3C//DTD XHTML 1.0 Strict//EN&quot; &quot;http://www.w3.org/TR/xhtml1/DTD/xhtml1-strict.dtd&quot;&gt;</div><div class="m" style="left:-5.00px;top:829.30px;font-size:16.75px;"><i class="p">&lt;</i><i class="t">html</i> <i class="a">xmlns</i><i class="p">=&quot;</i><i class="v u">http://www.w3.org/1999/xhtml</i><i class="p">&quot;</i> <i class="a">dir</i><i class="p">=&quot;</i><i class="v">ltr</i><i class="p">&quot;</i> <i class="a">xml:lang</i><i class="p">=&quot;</i><i class="v">de</i><i class="p">&quot;</i> <i class="a">lang</i><i class="p">=&quot;</i><i class="v">de</i><i class="p">&quot;&gt;</i></div><div style="left:779px;top:828.7px;width:46.5px;height:17px;background:#ededf0;border:1px solid #cfcfd4;border-radius:4px"></div><div class="m" style="left:783.50px;top:832.30px;font-size:13.0px;color:#0c0c0d;">event</div><div style="left:836px;top:828.7px;width:54.5px;height:17px;background:#fff;border:1px solid #cfcfd4;border-radius:4px"></div><div class="m" style="left:840.80px;top:832.30px;font-size:13.0px;color:#38383d;">scroll</div><div class="m" style="left:13.60px;top:855.60px;font-size:16.75px;"><i class="gp">&lt;</i><i class="gt">head</i><i class="gp">&gt;</i></div><div style="left:76.2px;top:856.9px;width:19.7px;height:12.7px;background:#ededf0;border:1px solid #cfcfd4;border-radius:3px"></div><div class="m" style="left:102.30px;top:855.60px;font-size:16.75px;"><i class="gp">&lt;/</i><i class="gt">head</i><i class="gp">&gt;</i></div><div class="m" style="left:13.60px;top:882.70px;font-size:16.75px;color:#fff;">&lt;body&gt;</div><div class="m" style="left:32.20px;top:908.90px;font-size:16.75px;"><i class="p">&lt;</i><i class="t">div</i> <i class="a">id</i><i class="p">=&quot;</i><i class="v">center</i><i class="p">&quot;&gt;</i></div><div style="left:206.2px;top:910.2px;width:19px;height:12.4px;background:#ededf0;border:1px solid #cfcfd4;border-radius:3px"></div><div class="m" style="left:230.80px;top:908.90px;font-size:16.75px;"><i class="p">&lt;/</i><i class="t">div</i><i class="p">&gt;</i></div><div class="m" style="left:13.60px;top:936.00px;font-size:16.75px;"><i class="p">&lt;/</i><i class="t">body</i><i class="p">&gt;</i></div><div class="m" style="left:-5.00px;top:963.00px;font-size:16.75px;"><i class="p">&lt;/</i><i class="t">html</i><i class="p">&gt;</i></div><svg width="2533" height="1181" viewBox="0 0 2533 1181" style="left:0;top:0;position:absolute"><path d="M-1.5 857.6 V870.8000000000001 L6.9 864.2 Z" fill="#8c8c8c"/><path d="M-4 888 H8.5 L2.25 896.2 Z" fill="#fff"/><path d="M17 911.2 V924.4000000000001 L25.4 917.8000000000001 Z" fill="#8c8c8c"/><circle cx="81.2" cy="864" r="1.6" fill="#0c0c0d"/><circle cx="86.1" cy="864" r="1.6" fill="#0c0c0d"/><circle cx="91" cy="864" r="1.6" fill="#0c0c0d"/><circle cx="211.2" cy="917.2" r="1.6" fill="#0c0c0d"/><circle cx="216.1" cy="917.2" r="1.6" fill="#0c0c0d"/><circle cx="221" cy="917.2" r="1.6" fill="#0c0c0d"/></svg><div style="left:0px;top:1144px;width:1678.5px;height:1px;background:#e0e0e2;"></div><div style="left:0px;top:1145px;width:1678.5px;height:36px;background:#fff;"></div><div style="left:0px;top:1145px;width:35px;height:36px;overflow:hidden"><div style="left:0px;top:-1145px;width:2533px;height:1181px"><div class="s" style="left:-13.24px;top:1152.70px;font-size:19.5px;color:#0c0c0d;transform:scaleX(1.0750);">html</div></div></div><div class="s" style="left:59.45px;top:1152.70px;font-size:19.5px;color:#0074e8;transform:scaleX(0.9510);">body</div><svg width="2533" height="1181" viewBox="0 0 2533 1181" style="left:0;top:0;position:absolute"><path d="M39 1157 L47.8 1163 L39 1168.8 L41.8 1163 Z" fill="#a4a4c0"/></svg><div style="left:1678.5px;top:757px;width:2.5px;height:424px;background:#e0e0e2;"></div><div style="left:1681px;top:758px;width:852px;height:39px;background:#f9f9fa;"></div><div style="left:1681px;top:797px;width:852px;height:1px;background:#e0e0e2;"></div><div style="left:1727px;top:757.6px;width:96px;height:3.2px;background:#0a84ff;"></div><div class="s" style="left:1744.50px;top:767.30px;font-size:19.5px;color:#0074e8;">Regeln</div><div class="s" style="left:1840.50px;top:767.30px;font-size:19.5px;color:#0c0c0d;transform:scaleX(0.9978);">Layout</div><div class="s" style="left:1934.51px;top:767.30px;font-size:19.5px;color:#0c0c0d;transform:scaleX(0.9946);">Berechnet</div><div class="s" style="left:2059.50px;top:767.30px;font-size:19.5px;color:#0c0c0d;transform:scaleX(1.0340);">Änderungen</div><div class="s" style="left:2203.50px;top:767.30px;font-size:19.5px;color:#0c0c0d;transform:scaleX(1.0317);">Schriftarten</div><div class="s" style="left:2341.50px;top:767.30px;font-size:19.5px;color:#0c0c0d;transform:scaleX(1.0413);">Animationen</div><div style="left:1681px;top:798px;width:852px;height:39px;background:#fff;"></div><div style="left:1681px;top:837px;width:852px;height:1px;background:#e0e0e2;"></div><div class="s" style="left:1718.60px;top:807.10px;font-size:19.5px;color:#9a9aa0;transform:scaleX(0.9447);">Stile filtern</div><div style="left:2340px;top:804px;width:1px;height:27.5px;background:#e0e0e2;"></div><div class="s" style="left:2347.66px;top:807.00px;font-size:19.5px;color:#0c0c0d;transform:scaleX(0.9361);">:hov</div><div class="s" style="left:2399.12px;top:807.00px;font-size:19.5px;color:#0c0c0d;transform:scaleX(0.8772);">.cls</div><div style="left:1681px;top:838px;width:852px;height:343px;background:#fff;"></div><div style="left:1681px;top:892px;width:852px;height:1px;background:#e0e0e2;"></div><div class="m" style="left:1688.00px;top:845.20px;font-size:16.75px;"><i class="p">Element</i></div><div class="m" style="left:1799.80px;top:845.20px;font-size:16.75px;"><i class="p">{</i></div><div class="m" style="left:2467.10px;top:844.70px;font-size:16.75px;"><i class="src">Inline</i></div><div class="m" style="left:1688.00px;top:871.80px;font-size:16.75px;"><i class="p">}</i></div><div class="m" style="left:1688.00px;top:901.20px;font-size:16.75px;"><i class="p">body</i></div><div class="m" style="left:1770.30px;top:901.20px;font-size:16.75px;"><i class="p">{</i></div><div class="m" style="left:2416.85px;top:899.80px;font-size:16.75px;"><i class="src">style.css:2</i></div><div class="m" style="left:1720.50px;top:926.30px;font-size:16.75px;"><i class="pn">background</i><i class="p">: </i></div><div class="m" style="left:1853.60px;top:926.30px;font-size:16.75px;"><i class="pv">url(</i><i class="v u">images/bg_body.jpg</i><i class="pv">)</i><i class="p">;</i></div><div class="m" style="left:1764.00px;top:951.50px;font-size:16.75px;text-decoration:line-through;text-decoration-color:#38383d;"><i class="pn">background-color</i><i class="p">: </i><i class="pv">rgba(0, 0, 0, 0)</i><i class="p">;</i></div><div class="m" style="left:1720.50px;top:977.80px;font-size:16.75px;"><i class="pn">background-color</i><i class="p">:</i></div><div class="m" style="left:1927.60px;top:977.80px;font-size:16.75px;"><i class="pv">#21528d</i><i class="p">;</i></div><div class="m" style="left:1720.50px;top:1000.60px;font-size:16.75px;"><i class="pn">font-family</i><i class="p">: </i><i class="pv u">Arial</i><i class="p">;</i></div><div class="m" style="left:1720.50px;top:1024.50px;font-size:16.75px;"><i class="pn">color</i><i class="p">:</i></div><div class="m" style="left:1816.70px;top:1024.50px;font-size:16.75px;"><i class="pv">#394b5f</i><i class="p">;</i></div><div class="m" style="left:1688.00px;top:1048.50px;font-size:16.75px;"><i class="p">}</i></div><svg width="2533" height="1181" viewBox="0 0 2533 1181" style="left:0;top:0;position:absolute"><g transform="translate(1692 769.3)"><rect x="1.25" y="1.25" width="22.5" height="16.8" rx="1.6" fill="none" stroke="#3b3b3c" stroke-width="2.5"/><rect x="14.3" y="2.3" width="3.4" height="14.7" fill="#c9c9cc"/><rect x="18.6" y="2.3" width="3.6" height="14.7" fill="#c9c9cc"/><path d="M13.6 1.2 V18 M18 1.2 V18" stroke="#3b3b3c" stroke-width="1.8"/><path d="M11 5.8 V13.4 L5.6 9.6 Z" fill="#3b3b3c"/></g><g transform="translate(1695 810)"><path d="M1 1 H15.5 L10 8.5 V16.8 L6.5 13.6 V8.5 Z" fill="#d7d7db" stroke="#8a8a8e" stroke-width="1.7" stroke-linejoin="round"/><path d="M2.5 2 H14 L9.4 7.8 H7.1 Z" fill="#fff"/></g><path d="M2448.7 820.2 H2469.5 M2459.1 809.8 V830.6" stroke="#3b3b3c" stroke-width="2.7"/><path d="M2499.5 809.4 H2508.2 L2514.8 816 V826.4 a3 3 0 0 1 -3 3 H2499.5 a3 3 0 0 1 -3 -3 V812.4 a3 3 0 0 1 3 -3 Z" fill="none" stroke="#3b3b3c" stroke-width="2.6" stroke-linejoin="round"/><path d="M2502 818.5 H2506 M2502 822 H2509.5 M2502 825.5 H2509.5" stroke="#3b3b3c" stroke-width="1.5"/><rect x="1772.5" y="848.4000000000001" width="12.6" height="12.6" rx="2" fill="none" stroke="#8f8f94" stroke-width="2.4"/><path d="M1768.3 854.7 H1771.3 M1786.3 854.7 H1789.3 M1778.8 844.2 V847.2 M1778.8 862.2 V865.2" stroke="#8f8f94" stroke-width="1.3"/><rect x="1742.2" y="904.2" width="12.6" height="12.6" rx="2" fill="none" stroke="#8f8f94" stroke-width="2.4"/><path d="M1738 910.5 H1741 M1756 910.5 H1759 M1748.5 900 V903 M1748.5 918 V921" stroke="#8f8f94" stroke-width="1.3"/><path d="M1839.4 929.8 V942.4 L1847.4 936.0999999999999 Z" fill="#8c8c8c"/><path d="M1740.2 946 V960 H1756.4" fill="none" stroke="#8c8c8c" stroke-width="1.3"/><circle cx="1910.6" cy="986.4" r="9.2" fill="#21528d" stroke="#c9c9cf" stroke-width="1.6"/><circle cx="1799.9" cy="1032.5" r="9.2" fill="#394b5f" stroke="#c9c9cf" stroke-width="1.6"/></svg></body></html>
